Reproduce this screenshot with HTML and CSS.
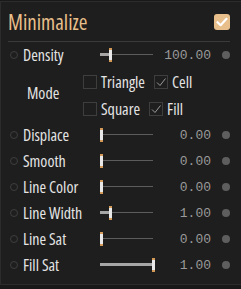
FILE: index.html
```html
<!DOCTYPE html>
<html lang="en">
  <head>
    <meta charset="UTF-8" />
    <title>Minimalize</title>
    <link rel="stylesheet" href="styles.css">
  </head>
  <body>
    <div class="panel">
      <div class="header">
        <span class="title">Minimalize</span>
        <span class="toggle">
          <svg width="12" height="10" viewBox="0 0 12 10"><path d="M1.5 5.2 L4.6 8.2 L10.5 1.8" fill="none" stroke="#fff" stroke-width="2.2" stroke-linecap="round" stroke-linejoin="round"/></svg>
        </span>
      </div>

      <div class="row">
        <span class="pin"></span>
        <span class="label">Density</span>
        <div class="slider"><div class="fill" style="width: 10px"></div><div class="thumb" style="left: 9px"></div></div>
        <span class="value">100.00</span>
        <span class="dot"></span>
      </div>

      <div class="mode">
        <span class="mode-label">Mode</span>
        <div class="options">
          <div class="opt-row">
            <span class="box"></span><span class="opt">Triangle</span>
            <span class="box checked"><svg width="12" height="12" viewBox="0 0 12 12"><path d="M2 6.5 L5 9.5 L10.5 2.5" fill="none" stroke="#9a9a9a" stroke-width="1"/></svg></span><span class="opt">Cell</span>
          </div>
          <div class="opt-row">
            <span class="box"></span><span class="opt">Square</span>
            <span class="box checked"><svg width="12" height="12" viewBox="0 0 12 12"><path d="M2 6.5 L5 9.5 L10.5 2.5" fill="none" stroke="#9a9a9a" stroke-width="1"/></svg></span><span class="opt">Fill</span>
          </div>
        </div>
      </div>

      <div class="row">
        <span class="pin"></span>
        <span class="label">Displace</span>
        <div class="slider"><div class="fill" style="width: 0px"></div><div class="thumb" style="left: 0px"></div></div>
        <span class="value">0.00</span>
        <span class="dot"></span>
      </div>
      <div class="row">
        <span class="pin"></span>
        <span class="label">Smooth</span>
        <div class="slider"><div class="fill" style="width: 0px"></div><div class="thumb" style="left: 0px"></div></div>
        <span class="value">0.00</span>
        <span class="dot"></span>
      </div>
      <div class="row">
        <span class="pin"></span>
        <span class="label">Line Color</span>
        <div class="slider"><div class="fill" style="width: 0px"></div><div class="thumb" style="left: 0px"></div></div>
        <span class="value">0.00</span>
        <span class="dot"></span>
      </div>
      <div class="row">
        <span class="pin"></span>
        <span class="label">Line Width</span>
        <div class="slider"><div class="fill" style="width: 10px"></div><div class="thumb" style="left: 9px"></div></div>
        <span class="value">1.00</span>
        <span class="dot"></span>
      </div>
      <div class="row">
        <span class="pin"></span>
        <span class="label">Line Sat</span>
        <div class="slider"><div class="fill" style="width: 0px"></div><div class="thumb" style="left: 0px"></div></div>
        <span class="value">0.00</span>
        <span class="dot"></span>
      </div>
      <div class="row">
        <span class="pin"></span>
        <span class="label">Fill Sat</span>
        <div class="slider"><div class="fill" style="width: 53px"></div><div class="thumb" style="left: 52px"></div></div>
        <span class="value">1.00</span>
        <span class="dot"></span>
      </div>
    </div>
  </body>
</html>
```

FILE: styles.css
```css
body {
  margin: 0;
  padding: 0;
  background-color: #191919;
  width: 241px;
  height: 289px;
  overflow: hidden;
}
* {
  font-family: "Open Sans", "Liberation Sans", sans-serif;
  font-stretch: 75%;
  box-sizing: border-box;
}
.panel {
  margin-top: 1px;
  background-color: #1e1e1e;
  border: 1px solid #2c2c2c;
  border-right: none;
  padding: 0 11px 6px 0;
}
.header {
  display: flex;
  justify-content: space-between;
  align-items: center;
  height: 40px;
  margin-left: 7px;
  border-bottom: 1px solid #3a3a3a;
}
.title {
  color: #e8bf8a;
  font-size: 21px;
}
.toggle {
  width: 16px;
  height: 16px;
  border-radius: 3px;
  background-color: #e8bf8a;
  display: flex;
  align-items: center;
  justify-content: center;
}
.row {
  display: flex;
  align-items: center;
  height: 26px;
  padding-left: 9px;
}
.pin {
  width: 8px;
  height: 8px;
  border-radius: 50%;
  border: 1px solid #3e3e3e;
  margin-right: 5px;
}
.label {
  width: 77px;
  color: #e4e4e4;
  font-size: 16px;
}
.slider {
  position: relative;
  width: 53px;
  height: 14px;
  background: linear-gradient(#5c5c5c, #5c5c5c) 0 6px / 100% 1px no-repeat;
}
.fill {
  height: 3px;
  margin-top: 5px;
  background-color: #a6a6a6;
}
.thumb {
  position: absolute;
  top: 0;
  width: 3px;
  height: 14px;
  background: linear-gradient(#d49a58 0 2px, #e8e8e8 2px 12px, #d49a58 12px);
}
.value {
  flex: 1;
  text-align: right;
  color: #9a9a9a;
  font-family: "Liberation Mono", monospace;
  font-stretch: normal;
  font-size: 13px;
}
.dot {
  width: 8px;
  height: 8px;
  border-radius: 50%;
  background-color: #5e5e5e;
  margin-left: 11px;
}
.mode {
  display: flex;
  height: 54px;
}
.mode-label {
  color: #e4e4e4;
  font-size: 16px;
  padding: 14px 0 0 26px;
  width: 82px;
}
.opt-row {
  display: flex;
  align-items: center;
  height: 27px;
}
.box {
  width: 14px;
  height: 14px;
  border: 1px solid #3e3e3e;
  margin-right: 4px;
  display: flex;
  align-items: center;
  justify-content: center;
}
.opt {
  color: #e4e4e4;
  font-size: 16px;
  margin-right: 9px;
}
```
